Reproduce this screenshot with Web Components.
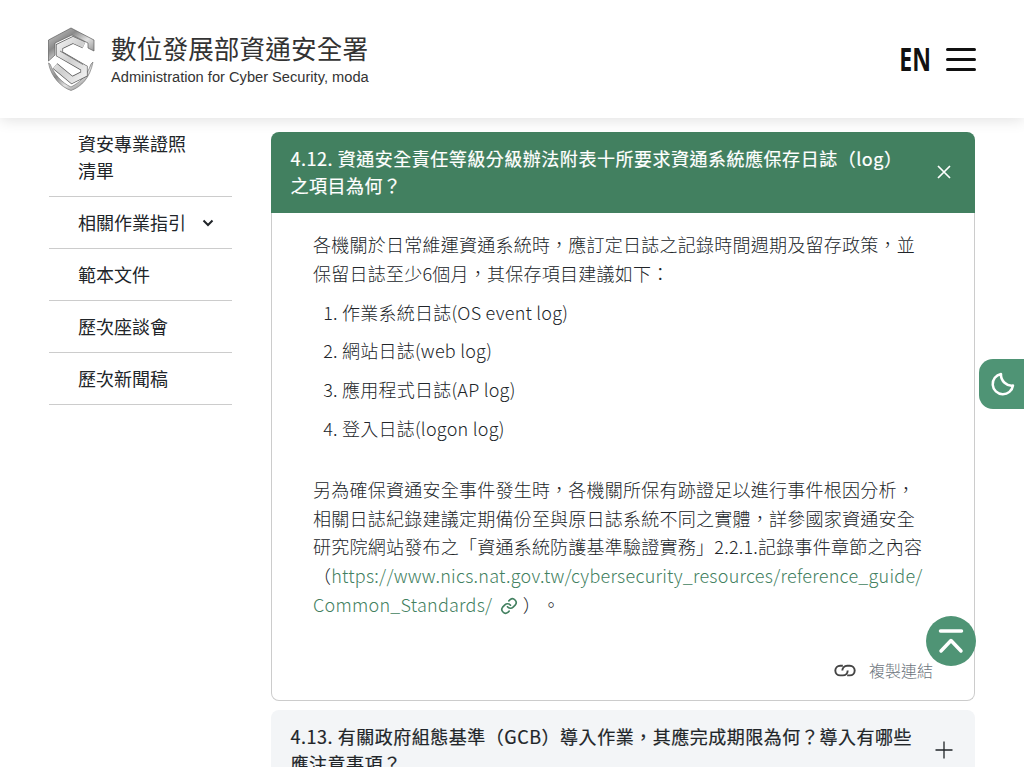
<!DOCTYPE html>
<html lang="zh-Hant"><head><meta charset="utf-8"><title>數位發展部資通安全署</title>
<style>
html,body{margin:0;height:767px;overflow:hidden;background:#fff}
body{font-family:"Noto Sans CJK TC",sans-serif;color:#212529;position:relative}
</style></head><body>
<site-header></site-header>
<page-layout>
  <side-nav slot="side">
    <nav-item>資安專業證照<br>清單</nav-item>
    <nav-item chevron>相關作業指引</nav-item>
    <nav-item>範本文件</nav-item>
    <nav-item>歷次座談會</nav-item>
    <nav-item>歷次新聞稿</nav-item>
  </side-nav>
  <faq-item open title-text="4.12. 資通安全責任等級分級辦法附表十所要求資通系統應保存日誌（log）之項目為何？">
    <faq-answer></faq-answer>
  </faq-item>
  <faq-item title-text="4.13. 有關政府組態基準（GCB）導入作業，其應完成期限為何？導入有哪些應注意事項？"></faq-item>
</page-layout>
<float-buttons></float-buttons>
<script>
function def(name, html){
  customElements.define(name, class extends HTMLElement{
    connectedCallback(){
      if(this.shadowRoot) return;
      this.attachShadow({mode:'open'}).innerHTML = typeof html==='function'?html(this):html;
    }
  });
}
const shield = `<svg width="50" height="64" viewBox="0 0 50 64" aria-hidden="true">
<defs><linearGradient id="g" x1="0" y1="0" x2="1" y2="1"><stop offset="0" stop-color="#d8d8d8"/><stop offset=".35" stop-color="#8a8a8a"/><stop offset=".6" stop-color="#e2e2e2"/><stop offset="1" stop-color="#6a6a6a"/></linearGradient>
<linearGradient id="l" x1="0" y1="0" x2="1" y2="1"><stop offset="0" stop-color="#f4f4f4"/><stop offset=".5" stop-color="#cfcfcf"/><stop offset="1" stop-color="#f0f0f0"/></linearGradient></defs>
<path d="M25 1 48 13V24L42 21V16L26 8 9 16V28L2.500 34V13Z" fill="url(#g)" stroke="#5c5c5c" stroke-width=".7" stroke-linejoin="round"/>
<path d="M4 37C8 47 16 56 25 60 33 56 41 49 45 37L47 35C44 51 35 60 25 63.500 15 60 5 50 2.500 36Z" fill="url(#g)" stroke="#6a6a6a" stroke-width=".6"/>
<path d="M38 18 27 13 13.500 19.500V27L38 41V47L26 53 9 39" fill="none" stroke="#5a5a5a" stroke-width="7.200"/>
<path d="M38 18 27 13 13.500 19.500V27L38 41V47L26 53 9 39" fill="none" stroke="url(#l)" stroke-width="5.800"/>
<path d="M14 24 37 37.500" fill="none" stroke="#777" stroke-width=".9"/>
</svg>`;
def('site-header', `<style>
:host{display:flex;box-sizing:border-box;height:118px;background:#fff;align-items:center;padding:0 48px 0 46px;box-shadow:0 2px 14px rgba(0,0,0,.12);position:relative;z-index:2}
.logo{display:flex;align-items:center;gap:15px;margin-top:-1px}
svg{display:block}
.t{display:flex;flex-direction:column}
.zh{font:400 25.6px/34px "Noto Sans CJK TC",sans-serif;letter-spacing:.12px;color:#333;white-space:nowrap;margin-top:1px}
.en{font:400 14.65px/20px "Liberation Sans",sans-serif;color:#333;white-space:nowrap;margin-top:2px}
.r{margin-left:auto;display:flex;align-items:center;gap:15px}
.lang{font:700 32px/36px "Noto Sans",sans-serif;color:#111;transform:scaleX(.72);transform-origin:right center;margin-top:-1px}
.b{display:flex;flex-direction:column;gap:7px;width:30px}
.b i{display:block;height:3px;background:#111;border-radius:2px}
</style><div class="logo">${shield}<div class="t"><span class="zh">數位發展部資通安全署</span><span class="en">Administration for Cyber Security, moda</span></div></div>
<div class="r"><span class="lang">EN</span><div class="b"><i></i><i></i><i></i></div></div>`);
def('page-layout', `<style>
:host{display:grid;grid-template-columns:183px 704px;column-gap:39px;padding:0 0 0 49px;align-items:start}
.m{padding-top:14px;display:flex;flex-direction:column;gap:9px}
</style><div><slot name="side"></slot></div><div class="m"><slot></slot></div>`);
def('side-nav', `<style>:host{display:block}</style><slot></slot>`);
def('nav-item', el=>`<style>
:host{display:flex;box-sizing:border-box;align-items:center;border-bottom:1px solid #ccc;padding:12px 17px 12px 29px;font:400 18px/27px "Noto Sans CJK TC",sans-serif;color:#212529}
.s{flex:1}svg{display:block}
</style><span class="s"><slot></slot></span>${el.hasAttribute('chevron')?'<svg width="14" height="14" viewBox="0 0 14 14"><path d="M2.500 4.500 7 9l4.500-4.500" fill="none" stroke="#212529" stroke-width="2"/></svg>':''}`);
def('faq-item', el=>{
 const open=el.hasAttribute('open');
 const x=`<svg width="18" height="18" viewBox="0 0 18 18"><path d="M3 3 15 15M15 3 3 15" stroke="#fff" stroke-width="1.700"/></svg>`;
 const p=`<svg width="18" height="18" viewBox="0 0 18 18"><path d="M9 .5V17.500M.5 9H17.500" stroke="#212529" stroke-width="1.300"/></svg>`;
 return `<style>
:host{display:block}
.h{display:flex;align-items:center;box-sizing:border-box;padding:13px 22px 14px 19.500px;border-radius:8px;background:#f3f5f7;color:#212529;font:400 18px/27px "Noto Sans CJK TC",sans-serif;letter-spacing:.52px;-webkit-text-stroke:.2px currentColor}
.h span{flex:1}
.h svg{flex:none;margin-left:20px;display:block}
:host([open]) .h{background:#428060;color:#fff;border-radius:8px 8px 0 0}
.b{border:1px solid #ccc;border-top:0;border-radius:0 0 8px 8px;min-height:487px;box-sizing:border-box}
</style><div class="h"><span>${el.getAttribute('title-text')}</span>${open?x:p}</div>${open?'<div class="b"><slot></slot></div>':''}`;
});
def('faq-answer', `<style>
:host{display:block;padding:17px 41px 19px;font:300 18px/28.8px "Noto Sans CJK TC",sans-serif;color:#212529;letter-spacing:.24px}
p{margin:0}
ol{margin:10px 0 32.300px;padding:0 0 0 29px}
li{margin-bottom:9.9px}
a{color:#428060;text-decoration:none}
a svg{vertical-align:-3px;margin-left:8px}
.e{margin-left:10px}
.c{display:flex;justify-content:flex-end;align-items:center;gap:12px;margin:40px 0 0;font-size:16px;line-height:22px;color:#6c757d;letter-spacing:0;font-weight:300;}
.c svg{display:block}
</style>
<p>各機關於日常維運資通系統時，應訂定日誌之記錄時間週期及留存政策，並保留日誌至少6個月，其保存項目建議如下：</p>
<ol><li>作業系統日誌(OS event log)</li><li>網站日誌(web log)</li><li>應用程式日誌(AP log)</li><li>登入日誌(logon log)</li></ol>
<p>另為確保資通安全事件發生時，各機關所保有跡證足以進行事件根因分析，相關日誌紀錄建議定期備份至與原日誌系統不同之實體，詳參國家資通安全研究院網站發布之「資通系統防護基準驗證實務」2.2.1.記錄事件章節之內容（<a>https://www.nics.nat.gov.tw/cybersecurity_resources/reference_guide/<wbr>Common_Standards/<svg width="18" height="18" viewBox="0 0 24 24" fill="none" stroke="#428060" stroke-width="2.200" stroke-linecap="round" stroke-linejoin="round"><path d="M10 13a5 5 0 0 0 7.500.5l3-3a5 5 0 0 0-7-7l-1.700 1.700"/><path d="M14 11a5 5 0 0 0-7.500-.5l-3 3a5 5 0 0 0 7 7l1.700-1.700"/></svg></a> ）<span class="e">。</span></p>
<div class="c"><svg width="24" height="14" viewBox="1 0 22 13" fill="none" stroke="#444" stroke-width="1.800"><path d="M10 2.500H7.500a4.500 4.500 0 0 0 0 9H10a4.500 4.500 0 0 0 4.500-4.500"/><path d="M14 11.500h2.500a4.500 4.500 0 0 0 0-9H14A4.500 4.500 0 0 0 9.500 7"/></svg><span>複製連結</span></div>`);
def('float-buttons', `<style>
:host{display:block}
.m{position:absolute;left:979px;top:359px;width:45px;height:50px;background:#4f9475;border-radius:14px 0 0 14px;display:flex;align-items:center;padding-left:11px;box-sizing:border-box}
.t{position:absolute;left:926px;top:616px;width:50px;height:50px;border-radius:50%;background:#4f9475;display:flex;align-items:center;justify-content:center}
svg{display:block}
</style><div class="m"><svg width="26" height="26" viewBox="0 0 26 26"><path d="M11 3A10.200 10.200 0 1 0 23 14.500C17 15.500 10.500 10 11 3Z" fill="none" stroke="#fff" stroke-width="2.500" stroke-linejoin="round"/></svg></div>
<div class="t"><svg width="26" height="26" viewBox="0 0 26 26" fill="none" stroke="#fff" stroke-width="3.500" stroke-linecap="round"><path d="M2.500 3H23.500M3 23 13 12.500 23 23" stroke-linejoin="round"/></svg></div>`);
</script>
</body></html>
